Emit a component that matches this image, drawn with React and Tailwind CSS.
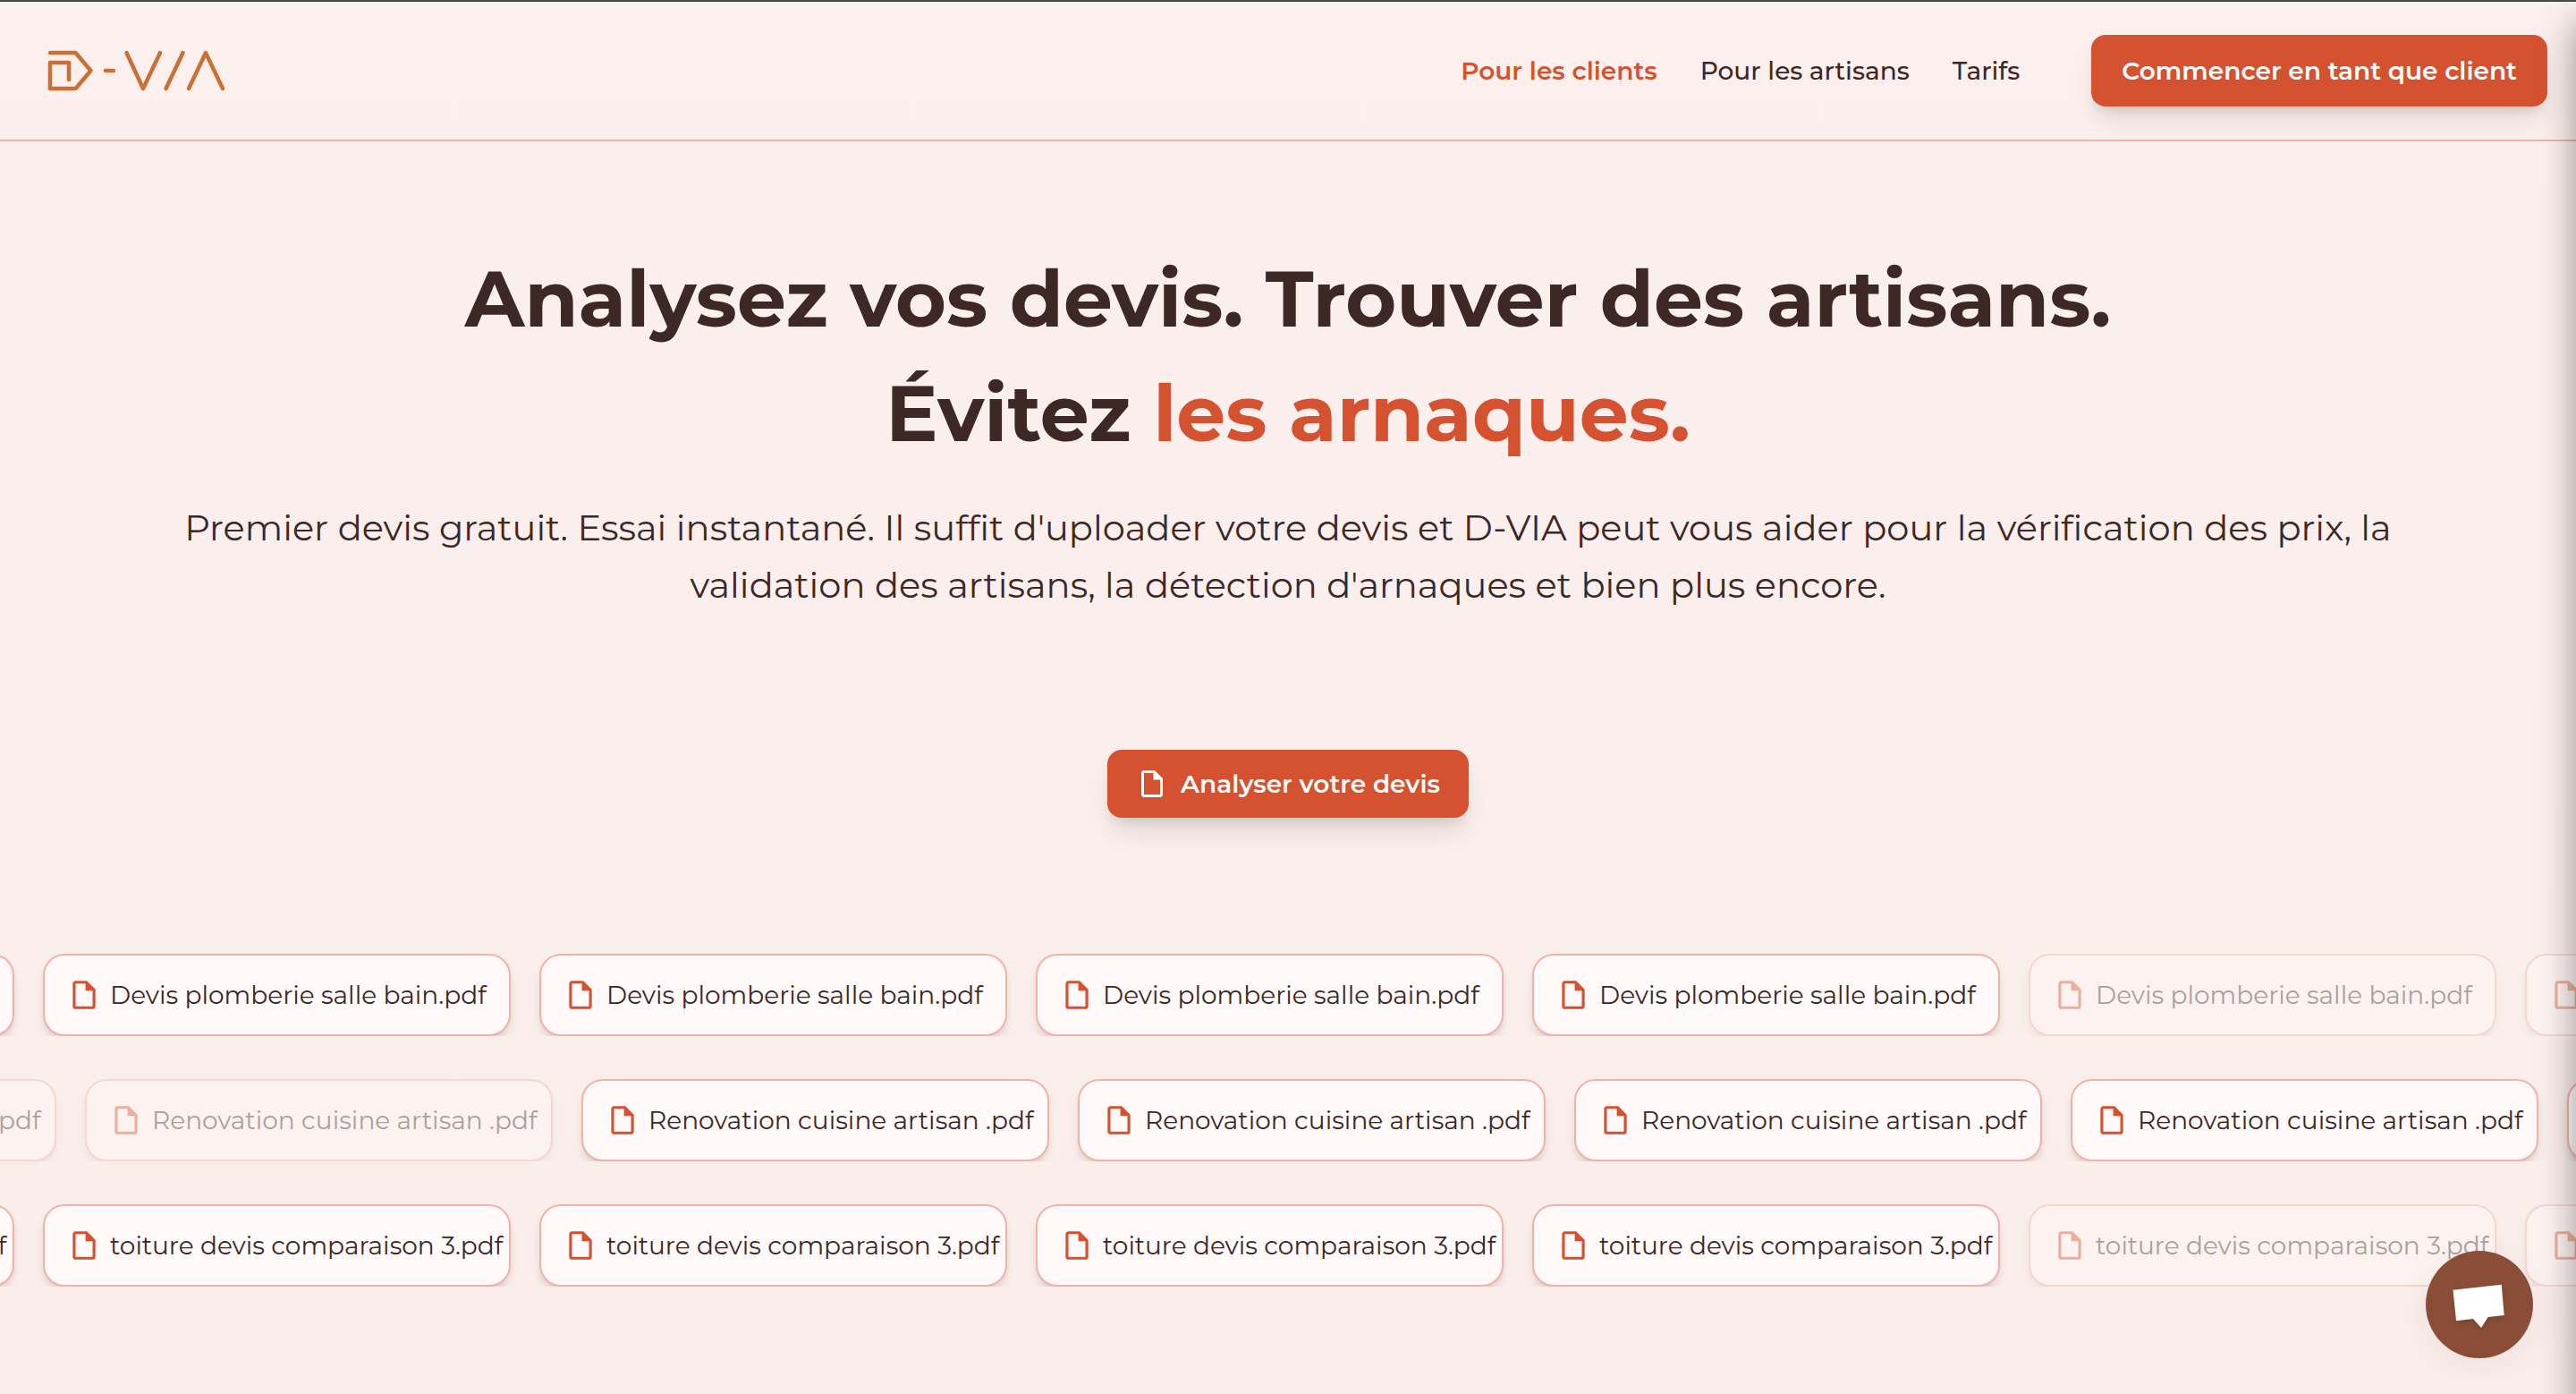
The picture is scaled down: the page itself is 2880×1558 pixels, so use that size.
import React from "react";
import clsx from "clsx";

function FileIcon({ className }) {
  return (
    <svg viewBox="0 0 24 24" fill="currentColor" aria-hidden="true" className={clsx("shrink-0", className)}>
      <path d="M14 2H6c-1.100 0-1.990.9-1.990 2L4 20c0 1.100.89 2 1.990 2H18c1.100 0 2-.9 2-2V8l-6-6zM6 20V4h7v5h5v11H6z" />
    </svg>
  );
}

function Logo() {
  return (
    <svg
      viewBox="0 0 200 48"
      fill="none"
      stroke="#cb7035"
      strokeWidth="4.500"
      strokeLinecap="round"
      strokeLinejoin="round"
      role="img"
      aria-label="D-VIA"
      className="h-12 w-[200px]"
    >
      <path d="M4 4h28.500l17 20-17 20H4V15h21v19" />
      <path d="M66 24h9M89.500 4l18.500 40L127 4M152.500 4 133.500 44M159 44 178 4l19 40" />
    </svg>
  );
}

const navLinks = [
  { label: "Pour les clients", active: true },
  { label: "Pour les artisans" },
  { label: "Tarifs" },
];

const fileRows = [
  { name: "Devis plomberie salle bain.pdf", faded: [5, 6], offset: "-ml-[507px]" },
  { name: "Renovation cuisine artisan .pdf", faded: [0, 1], offset: "-ml-[460px]" },
  { name: "toiture devis comparaison 3.pdf", faded: [5, 6], offset: "-ml-[507px]" },
];

function FileCard({ name, faded }) {
  return (
    <li
      className={clsx(
        "flex h-[92px] w-[523px] shrink-0 items-center gap-2.5 whitespace-nowrap rounded-3xl border-2 border-[#f3b1a9] bg-[#fff9f9] pl-[25px] text-[28px] shadow-[0_8px_12px_-2px_rgba(0,0,0,0.1),0_4px_8px_-4px_rgba(0,0,0,0.1)]",
        faded && "opacity-40"
      )}
    >
      <FileIcon className="size-[38px] text-[#d55230]" />
      {name}
    </li>
  );
}

export default function App() {
  return (
    <div className="relative min-h-screen overflow-hidden border-t-2 border-[#48484a] bg-linear-to-b from-[#fbf0ed] to-[#faeeeb] font-['Montserrat','Inter',sans-serif] text-[#3d2825]">
      <header className="flex h-[156px] items-center justify-between border-b-2 border-[#f3b1a9] px-8">
        <a href="#" className="ml-5">
          <Logo />
        </a>
        <div className="flex items-center gap-20">
          <nav className="flex gap-12 text-[28px] font-medium">
            {navLinks.map(({ label, active }) => (
              <a key={label} href="#" className={clsx(active && "font-semibold text-[#d55230]")}>
                {label}
              </a>
            ))}
          </nav>
          <button
            type="button"
            className="h-20 rounded-2xl bg-[#d55230] px-[34px] text-[28px] font-semibold text-white shadow-[0_20px_30px_-6px_rgba(0,0,0,0.1),0_8px_12px_-4px_rgba(0,0,0,0.1)]"
          >
            Commencer en tant que client
          </button>
        </div>
      </header>

      <main>
        <section className="flex flex-col items-center pt-28 text-center">
          <h1 className="text-[87px] leading-[128px] font-bold">
            Analysez vos devis. Trouver des artisans.
            <br />
            Évitez <span className="text-[#d55230]">les arnaques.</span>
          </h1>
          <p className="mt-8 max-w-[2560px] text-[40px] leading-[64px]">
            Premier devis gratuit. Essai instantané. Il suffit d'uploader votre devis et D-VIA peut vous aider pour la
            vérification des prix, la validation des artisans, la détection d'arnaques et bien plus encore.
          </p>
          <button
            type="button"
            className="mt-[152px] flex h-[76px] items-center gap-3.5 rounded-2xl bg-[#d55230] px-8 text-[28px] font-semibold text-white shadow-[0_20px_30px_-6px_rgba(0,0,0,0.1),0_8px_12px_-4px_rgba(0,0,0,0.1)]"
          >
            <FileIcon className="size-9" />
            Analyser votre devis
          </button>
        </section>

        <section className="mt-[152px] flex flex-col gap-12">
          {fileRows.map(({ name, faded, offset }) => (
            <div key={name} className="overflow-hidden">
              <ul className={clsx("flex gap-8", offset)}>
                {[0, 1, 2, 3, 4, 5, 6].map((i) => (
                  <FileCard key={i} name={name} faded={faded.includes(i)} />
                ))}
              </ul>
            </div>
          ))}
        </section>
      </main>

      <button
        type="button"
        aria-label="Ouvrir le chat"
        className="fixed right-12 bottom-10 size-[120px] rounded-full bg-[#8a4e38] shadow-[0_8px_40px_rgba(0,0,0,0.06)]"
      >
        <svg viewBox="0 0 120 120" aria-hidden="true" className="size-full drop-shadow-md">
          <path d="M30.500 43.700 84.700 37.700 87.700 72 69.700 74 62 86 53 76 34 78.300z" fill="#fff" />
        </svg>
      </button>

      <div
        aria-hidden="true"
        className="pointer-events-none absolute top-6 -right-10 -bottom-20 w-10 shadow-[0_0_40px_rgba(0,0,0,0.4)]"
      />
    </div>
  );
}
